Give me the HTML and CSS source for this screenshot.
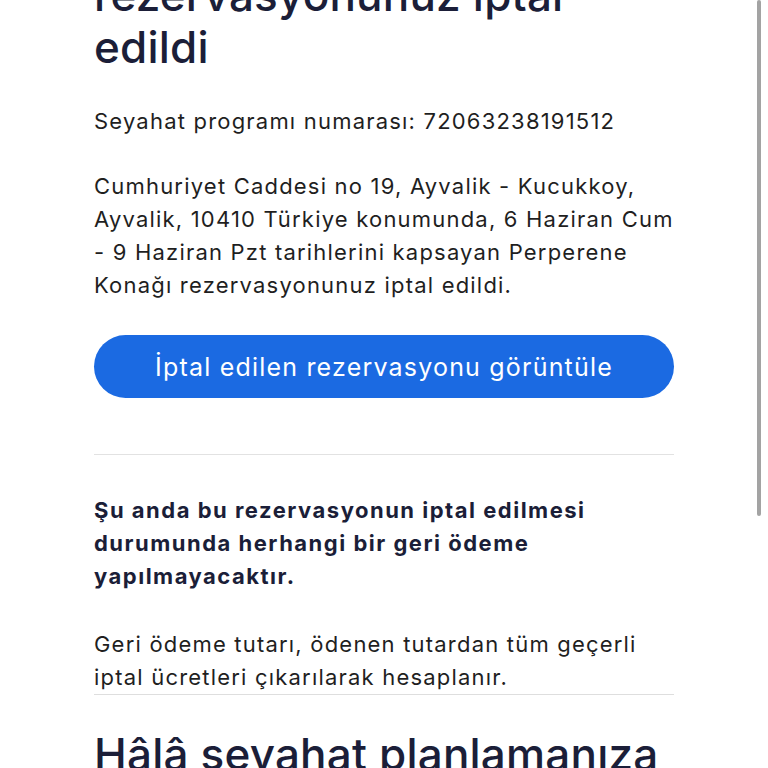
FILE: index.html
```html
<!DOCTYPE html>
<html lang="tr">
<head>
    <meta charset="UTF-8">
    <meta name="viewport" content="width=device-width, initial-scale=1.0">
    <title>Rezervasyon iptal edildi</title>
    <link rel="stylesheet" href="styles.css">
</head>
<body>

    <div class="page">

        <!-- Cancel summary -->
        <h1 class="title">Perperene Konağı<br>rezervasyonunuz iptal<br>edildi</h1>

        <p class="text">Seyahat programı numarası: 72063238191512</p>

        <p class="text">Cumhuriyet Caddesi no 19, Ayvalik - Kucukkoy,<br>Ayvalik, 10410 Türkiye konumunda, 6 Haziran Cum<br>- 9 Haziran Pzt tarihlerini kapsayan Perperene<br>Konağı rezervasyonunuz iptal edildi.</p>

        <a class="btn" href="#">İptal edilen rezervasyonu görüntüle</a>

        <hr class="divider">

        <!-- Refund info -->
        <p class="text bold">Şu anda bu rezervasyonun iptal edilmesi<br>durumunda herhangi bir geri ödeme<br>yapılmayacaktır.</p>

        <p class="text refund">Geri ödeme tutarı, ödenen tutardan tüm geçerli<br>iptal ücretleri çıkarılarak hesaplanır.</p>

        <hr class="divider thin">

        <h2 class="title next">Hâlâ seyahat planlamanıza<br>yardımcı olabiliriz</h2>

    </div>

    <div class="scrollbar"></div>

</body>
</html>
```

FILE: styles.css
```css
* {
    box-sizing: border-box;
    margin: 0;
    padding: 0;
}

body {
    background: #ffffff;
    font-family: 'Inter', 'Noto Sans', sans-serif;
    color: #1f1f1f;
    overflow: hidden;
    height: 768px;
}

.page {
    width: 580px;
    margin-left: 94px;
    margin-top: -83px;
}

/* Headings */
.title {
    font-size: 44px;
    line-height: 52px;
    font-weight: 500;
    color: #1b1e38;
    letter-spacing: 0.2px;
}

.next {
    margin-top: 33px;
}

/* Body text */
.text {
    font-size: 22px;
    line-height: 33px;
    letter-spacing: 1.2px;
    margin-top: 32px;
    white-space: nowrap;
}

.bold {
    font-weight: 700;
    color: #1b1e38;
    letter-spacing: 1.5px;
    margin-top: 39px;
}

.refund {
    margin-top: 35px;
}

/* Button */
.btn {
    display: flex;
    align-items: center;
    justify-content: center;
    height: 63px;
    margin-top: 33px;
    background: #1b6ae2;
    color: #ffffff;
    border-radius: 32px;
    font-size: 25px;
    letter-spacing: 1.2px;
    text-decoration: none;
}

.divider {
    border: none;
    border-top: 1px solid #e2e2e2;
    margin-top: 56px;
}

.divider.thin {
    margin-top: 0;
    border-top-color: #dedede;
}

/* iOS style scroll indicator */
.scrollbar {
    position: fixed;
    top: 0;
    left: 757px;
    width: 4px;
    height: 516px;
    background: #a3a3a3;
    border-radius: 2px;
}
```
